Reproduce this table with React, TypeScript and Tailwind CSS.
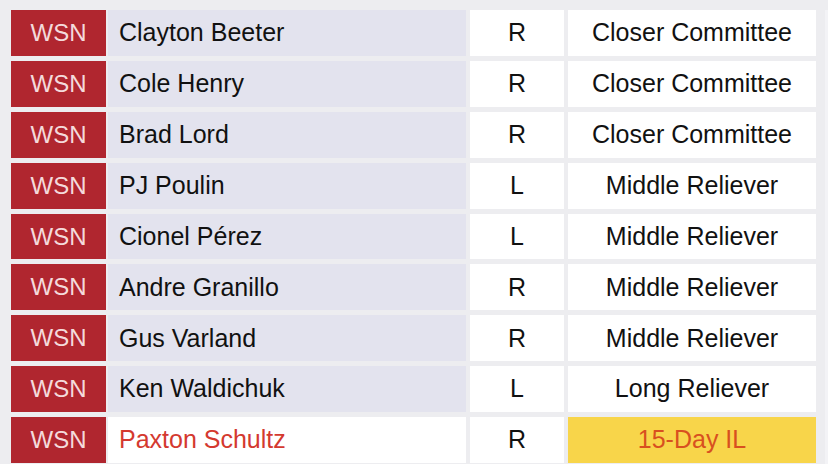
const rows = [
  { name: "Clayton Beeter", hand: "R", role: "Closer Committee" },
  { name: "Cole Henry", hand: "R", role: "Closer Committee" },
  { name: "Brad Lord", hand: "R", role: "Closer Committee" },
  { name: "PJ Poulin", hand: "L", role: "Middle Reliever" },
  { name: "Cionel Pérez", hand: "L", role: "Middle Reliever" },
  { name: "Andre Granillo", hand: "R", role: "Middle Reliever" },
  { name: "Gus Varland", hand: "R", role: "Middle Reliever" },
  { name: "Ken Waldichuk", hand: "L", role: "Long Reliever" },
  { name: "Paxton Schultz", hand: "R", role: "15-Day IL", injured: true },
];

export default function App() {
  return (
    <div
      className="w-[828px] h-[464px] overflow-hidden bg-[#ededf0] pt-[10px] pl-[11px] flex"
      style={{ fontFamily: '"Liberation Sans", Arial, sans-serif' }}
    >
      <div className="flex flex-col gap-y-[5px]">
        {rows.map((r) => (
          <div key={r.name} className="flex h-[45.9px]">
            <div className="w-[95px] bg-[#b0262f] text-[#f4dadb] text-[24px] flex items-center justify-center">
              WSN
            </div>
            <div
              className={
                r.injured
                  ? "ml-[2px] w-[358px] bg-white text-[#d4392f] text-[25px] flex items-center pl-[11px]"
                  : "ml-[2px] w-[358px] bg-[#e3e3ee] text-[#111111] text-[25px] flex items-center pl-[11px]"
              }
            >
              {r.name}
            </div>
            <div className="ml-[4px] w-[94px] bg-white text-[#111111] text-[25px] flex items-center justify-center">
              {r.hand}
            </div>
            <div
              className={
                r.injured
                  ? "ml-[4px] w-[248px] bg-[#f8d54a] text-[#d8501f] text-[25px] flex items-center justify-center"
                  : "ml-[4px] w-[248px] bg-white text-[#111111] text-[25px] flex items-center justify-center"
              }
            >
              {r.role}
            </div>
          </div>
        ))}
      </div>
      <div className="ml-[9px] w-[3px] bg-[#f3f3f6]" />
    </div>
  );
}
